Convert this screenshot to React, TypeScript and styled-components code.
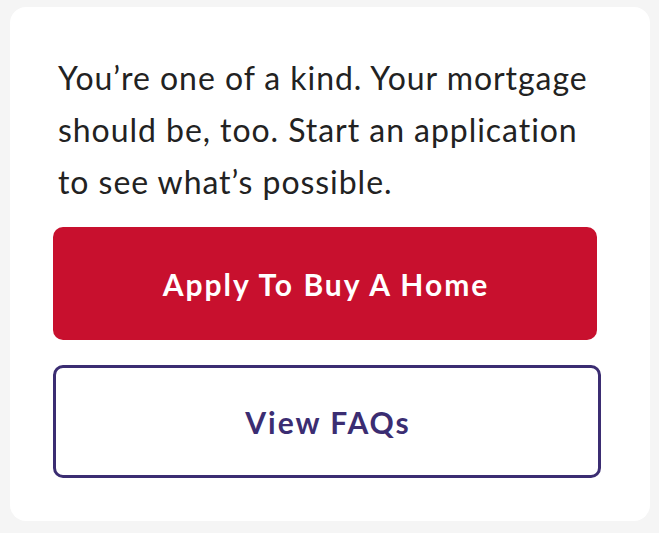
import React from "react";
import styled, { createGlobalStyle } from "styled-components";

const Global = createGlobalStyle`
  html, body { margin: 0; padding: 0; background: #f5f5f5; }
  body { font-family: Lato, "Open Sans", sans-serif; -webkit-font-smoothing: antialiased; }
`;

const Page = styled.div`
  padding: 7px 9px 12px 10px;
`;

const Card = styled.section`
  background: #ffffff;
  border-radius: 16px;
  height: 514px;
  box-sizing: border-box;
  padding: 45px 49px 0 43px;
  display: flex;
  flex-direction: column;
`;

const Intro = styled.p`
  margin: 0 0 0 5px;
  font-size: 32px;
  letter-spacing: 0.95px;
  line-height: 52px;
  color: #222222;
  font-weight: 400;
`;

const Actions = styled.div`
  display: flex;
  flex-direction: column;
  gap: 25px;
  margin-top: 19px;
`;

const Button = styled.button<{ $variant: "primary" | "outline" }>`
  box-sizing: border-box;
  height: 113px;
  width: ${(p) => (p.$variant === "primary" ? "544px" : "548px")};
  border-radius: 10px;
  font-family: Lato, "Open Sans", sans-serif;
  font-size: 30px;
  font-weight: 700;
  letter-spacing: 2px;
  cursor: pointer;
  background: ${(p) => (p.$variant === "primary" ? "#c8102e" : "#ffffff")};
  color: ${(p) => (p.$variant === "primary" ? "#ffffff" : "#3b2d72")};
  border: ${(p) => (p.$variant === "primary" ? "none" : "3.5px solid #3b2d72")};
  padding: 0 0 0 2px;
`;

export default function App() {
  return (
    <>
      <Global />
      <Page>
        <Card>
          <Intro>
            You’re one of a kind. Your mortgage should be, too. Start an application to see what’s possible.
          </Intro>
          <Actions>
            <Button $variant="primary">Apply To Buy A Home</Button>
            <Button $variant="outline">View FAQs</Button>
          </Actions>
        </Card>
      </Page>
    </>
  );
}
